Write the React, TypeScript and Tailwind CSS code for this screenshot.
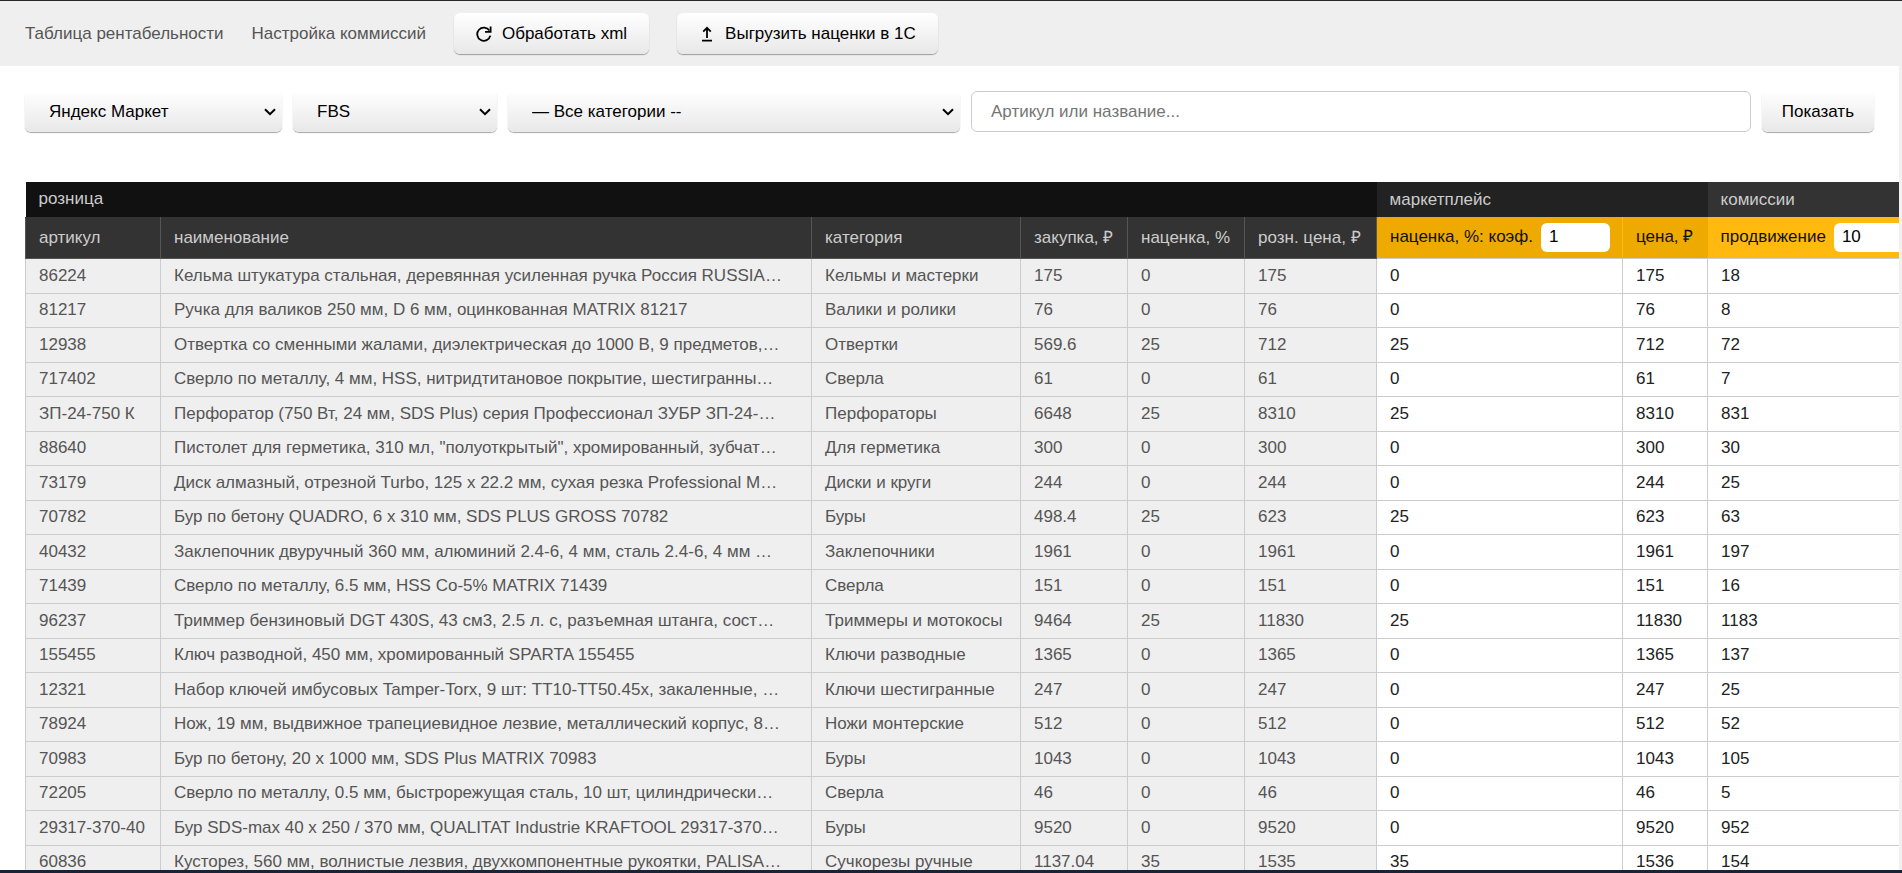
import type { ReactNode } from 'react'

interface Product {
  sku: string
  name: string
  category: string
  purchase: string
  markup: string
  retail: string
  price: string
  promo: string
}

const products: Product[] = [
  { sku: '86224', name: 'Кельма штукатура стальная, деревянная усиленная ручка Россия RUSSIA…', category: 'Кельмы и мастерки', purchase: '175', markup: '0', retail: '175', price: '175', promo: '18' },
  { sku: '81217', name: 'Ручка для валиков 250 мм, D 6 мм, оцинкованная MATRIX 81217', category: 'Валики и ролики', purchase: '76', markup: '0', retail: '76', price: '76', promo: '8' },
  { sku: '12938', name: 'Отвертка со сменными жалами, диэлектрическая до 1000 В, 9 предметов,…', category: 'Отвертки', purchase: '569.6', markup: '25', retail: '712', price: '712', promo: '72' },
  { sku: '717402', name: 'Сверло по металлу, 4 мм, HSS, нитридтитановое покрытие, шестигранны…', category: 'Сверла', purchase: '61', markup: '0', retail: '61', price: '61', promo: '7' },
  { sku: 'ЗП-24-750 К', name: 'Перфоратор (750 Вт, 24 мм, SDS Plus) серия Профессионал ЗУБР ЗП-24-…', category: 'Перфораторы', purchase: '6648', markup: '25', retail: '8310', price: '8310', promo: '831' },
  { sku: '88640', name: 'Пистолет для герметика, 310 мл, "полуоткрытый", хромированный, зубчат…', category: 'Для герметика', purchase: '300', markup: '0', retail: '300', price: '300', promo: '30' },
  { sku: '73179', name: 'Диск алмазный, отрезной Turbo, 125 х 22.2 мм, сухая резка Professional M…', category: 'Диски и круги', purchase: '244', markup: '0', retail: '244', price: '244', promo: '25' },
  { sku: '70782', name: 'Бур по бетону QUADRO, 6 x 310 мм, SDS PLUS GROSS 70782', category: 'Буры', purchase: '498.4', markup: '25', retail: '623', price: '623', promo: '63' },
  { sku: '40432', name: 'Заклепочник двуручный 360 мм, алюминий 2.4-6, 4 мм, сталь 2.4-6, 4 мм …', category: 'Заклепочники', purchase: '1961', markup: '0', retail: '1961', price: '1961', promo: '197' },
  { sku: '71439', name: 'Сверло по металлу, 6.5 мм, HSS Co-5% MATRIX 71439', category: 'Сверла', purchase: '151', markup: '0', retail: '151', price: '151', promo: '16' },
  { sku: '96237', name: 'Триммер бензиновый DGT 430S, 43 см3, 2.5 л. с, разъемная штанга, сост…', category: 'Триммеры и мотокосы', purchase: '9464', markup: '25', retail: '11830', price: '11830', promo: '1183' },
  { sku: '155455', name: 'Ключ разводной, 450 мм, хромированный SPARTA 155455', category: 'Ключи разводные', purchase: '1365', markup: '0', retail: '1365', price: '1365', promo: '137' },
  { sku: '12321', name: 'Набор ключей имбусовых Tamper-Torx, 9 шт: TT10-TT50.45x, закаленные, …', category: 'Ключи шестигранные', purchase: '247', markup: '0', retail: '247', price: '247', promo: '25' },
  { sku: '78924', name: 'Нож, 19 мм, выдвижное трапециевидное лезвие, металлический корпус, 8…', category: 'Ножи монтерские', purchase: '512', markup: '0', retail: '512', price: '512', promo: '52' },
  { sku: '70983', name: 'Бур по бетону, 20 x 1000 мм, SDS Plus MATRIX 70983', category: 'Буры', purchase: '1043', markup: '0', retail: '1043', price: '1043', promo: '105' },
  { sku: '72205', name: 'Сверло по металлу, 0.5 мм, быстрорежущая сталь, 10 шт, цилиндрически…', category: 'Сверла', purchase: '46', markup: '0', retail: '46', price: '46', promo: '5' },
  { sku: '29317-370-40', name: 'Бур SDS-max 40 x 250 / 370 мм, QUALITAT Industrie KRAFTOOL 29317-370…', category: 'Буры', purchase: '9520', markup: '0', retail: '9520', price: '9520', promo: '952' },
  { sku: '60836', name: 'Кусторез, 560 мм, волнистые лезвия, двухкомпонентные рукоятки, PALISA…', category: 'Сучкорезы ручные', purchase: '1137.04', markup: '35', retail: '1535', price: '1536', promo: '154' },
]

const raised = 'h-[41px] rounded-md bg-linear-to-b from-white to-[#e8e8e8] text-black shadow-[0_1px_1px_rgba(0,0,0,0.35)]'

function RefreshIcon() {
  return (
    <svg viewBox="0 0 16 16" className="h-4 w-4" fill="none" stroke="currentColor" strokeWidth="1.8" aria-hidden="true">
      <path d="M13.4 4.6A6.6 6.6 0 1 0 14.3 9.6" />
      <path d="M14.6 0.6V5.8H9" />
    </svg>
  )
}

function UploadIcon() {
  return (
    <svg viewBox="0 0 16 16" className="h-4 w-4" fill="none" stroke="currentColor" strokeWidth="1.8" aria-hidden="true">
      <path d="M3 14.6h10M8 12V2M4.2 5.6L8 1.8l3.8 3.8" />
    </svg>
  )
}

function Select({ label, className, children }: { label: string; className: string; children: ReactNode }) {
  return (
    <div className={`relative ${className}`}>
      <select aria-label={label} className={`w-full appearance-none pl-6 pr-8 ${raised}`}>
        {children}
      </select>
      <svg viewBox="0 0 12 8" className="pointer-events-none absolute right-1.5 top-[17px] h-2 w-3" fill="none" stroke="black" strokeWidth="2" aria-hidden="true">
        <path d="M1 1.2l5 5 5-5" />
      </svg>
    </div>
  )
}

const grey = 'truncate border border-[#ccc] bg-[#efefef] px-[13px] text-[#555]'
const white = 'truncate border border-[#ccc] bg-white px-[13px] text-[#222]'
const darkHead = 'border border-[#555] border-t-[#333] bg-[#333] px-[13px] font-normal'
const coefInput = 'ml-2 h-[29px] w-[69px] rounded-md bg-white px-2 text-black'

export default function App() {
  return (
    <div className="flex h-screen flex-col overflow-hidden border-b-3 border-t border-b-[#18233a] border-t-[#2a2629] bg-white font-['Liberation_Sans',Arial,sans-serif] text-[17px] leading-5">
      <header className="flex h-[65px] shrink-0 items-center gap-7 bg-[#efefef] px-[25px] text-[#555]">
        <a href="#profit">Таблица рентабельности</a>
        <a href="#fees">Настройка коммиссий</a>
        <button type="button" className={`flex items-center gap-2.5 px-[22px] ${raised}`}>
          <RefreshIcon />
          Обработать xml
        </button>
        <button type="button" className={`flex items-center gap-2.5 px-[22px] ${raised}`}>
          <UploadIcon />
          Выгрузить наценки в 1С
        </button>
      </header>

      <div className="flex min-h-0 flex-1">
        <main className="min-w-0 flex-1 overflow-hidden pl-[25px] pt-[25px]">
          <form className="flex gap-[11px] pr-[25px]">
            <Select label="Маркетплейс" className="w-[257px]">
              <option>Яндекс Маркет</option>
            </Select>
            <Select label="Схема" className="w-[204px]">
              <option>FBS</option>
            </Select>
            <Select label="Категория" className="w-[452px]">
              <option>— Все категории --</option>
            </Select>
            <input
              type="search"
              aria-label="Артикул или название"
              placeholder="Артикул или название..."
              className="h-[41px] min-w-0 flex-1 rounded-md border border-[#ccc] px-[19px] placeholder:text-[#757575]"
            />
            <button type="button" className={`px-5 ${raised}`}>
              Показать
            </button>
          </form>

          <table className="mt-[50px] w-[2073px] table-fixed border-collapse text-left">
            <colgroup>
              <col className="w-[135px]" />
              <col className="w-[651px]" />
              <col className="w-[209px]" />
              <col className="w-[107px]" />
              <col className="w-[117px]" />
              <col className="w-[132px]" />
              <col className="w-[246px]" />
              <col className="w-[85px]" />
              <col />
            </colgroup>
            <thead className="text-[#ccc]">
              <tr className="h-[35px]">
                <th colSpan={6} className="bg-[#111] px-[13px] font-normal">розница</th>
                <th colSpan={2} className="bg-[#222] px-[13px] font-normal">маркетплейс</th>
                <th className="bg-[#333] px-[13px] font-normal">комиссии</th>
              </tr>
              <tr className="h-[41px] whitespace-nowrap">
                <th className={darkHead}>артикул</th>
                <th className={darkHead}>наименование</th>
                <th className={darkHead}>категория</th>
                <th className={darkHead}>закупка, ₽</th>
                <th className={darkHead}>наценка, %</th>
                <th className={darkHead}>розн. цена, ₽</th>
                <th className="border-r border-[#ffb90f] bg-[#eeaa00] px-[13px] font-normal text-[#111]">
                  <label>
                    наценка, %: коэф.
                    <input type="text" defaultValue="1" className={coefInput} />
                  </label>
                </th>
                <th className="bg-[#eeaa00] px-[13px] font-normal text-[#111]">цена, ₽</th>
                <th className="bg-[#ffb90f] px-[13px] font-normal text-[#111]">
                  <label>
                    продвижение
                    <input type="text" defaultValue="10" className={coefInput} />
                  </label>
                </th>
              </tr>
            </thead>
            <tbody>
              {products.map((p) => (
                <tr key={p.sku} className="odd:h-[35px] even:h-[34px]">
                  <td className={grey}>{p.sku}</td>
                  <td className={grey}>{p.name}</td>
                  <td className={grey}>{p.category}</td>
                  <td className={grey}>{p.purchase}</td>
                  <td className={grey}>{p.markup}</td>
                  <td className={grey}>{p.retail}</td>
                  <td className={white}>{p.markup}</td>
                  <td className={white}>{p.price}</td>
                  <td className={white}>{p.promo}</td>
                </tr>
              ))}
            </tbody>
          </table>
        </main>
        <div className="w-[3px] shrink-0 bg-[#f1f1f1]" />
      </div>
    </div>
  )
}
